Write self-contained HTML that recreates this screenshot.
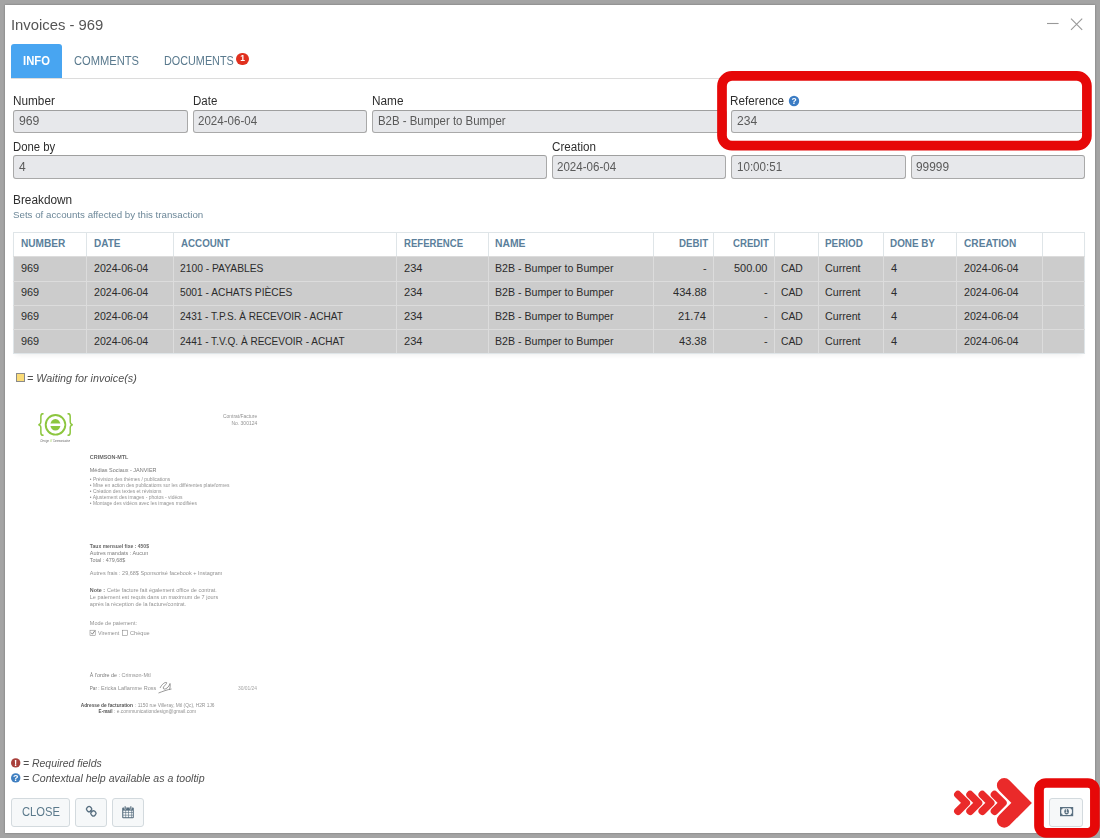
<!DOCTYPE html>
<html lang="en">
<head>
<meta charset="utf-8">
<title>Invoices - 969</title>
<style>
*{box-sizing:border-box;margin:0;padding:0}
html,body{width:1100px;height:838px;overflow:hidden;background:#a4a4a4;font-family:"Liberation Sans",sans-serif}
body{position:relative}
.a{position:absolute}
.t{position:absolute;white-space:nowrap;line-height:16px;height:16px;transform-origin:0 0}
#win{left:5px;top:5px;width:1090px;height:828px;background:#fff;box-shadow:0 0 2px rgba(0,0,0,.3)}
.inp{position:absolute;background:#e7e8eb;border:1px solid #a9a9a9;border-top-color:#9f9f9f;border-radius:3px}
.btn{position:absolute;background:#f6f8f9;border:1px solid #d3dade;border-radius:3px}
.vl{position:absolute;width:1px;background:#dfe5e8;top:232px;height:24px}
.vr{position:absolute;width:1px;background:#dcdcdc;top:256px;height:97px}
.hl{position:absolute;left:13px;width:1072px;height:1px;background:#dcdcdc}
</style>
</head>
<body>
<div class="a" id="win"></div>
<!-- window controls -->
<svg class="a" style="left:1040px;top:12px" width="50" height="24" viewBox="1040 12 50 24">
  <path d="M1047 23.5H1058.6" stroke="#999" stroke-width="1.1" fill="none"/>
  <path d="M1071 18.6L1082.2 29.9M1082.2 18.6L1071 29.9" stroke="#999" stroke-width="1.1" fill="none"/>
</svg>
<!-- tabs -->
<div class="a" style="left:11px;top:44px;width:51px;height:34px;background:#48a5f1;border-radius:3px 3px 0 0"></div>
<div class="a" style="left:11px;top:78px;width:1074px;height:1px;background:#dcdcdc"></div>
<div class="a" style="left:236px;top:52.7px;width:12.8px;height:12.8px;border-radius:50%;background:#e0301e"></div>
<!-- inputs -->
<div class="inp" style="left:13px;top:110px;width:174.5px;height:23px"></div>
<div class="inp" style="left:193px;top:110px;width:173.5px;height:23px"></div>
<div class="inp" style="left:372px;top:110px;width:354.5px;height:23px"></div>
<div class="inp" style="left:731px;top:110px;width:353.5px;height:23px"></div>
<div class="inp" style="left:13px;top:155px;width:534px;height:24px"></div>
<div class="inp" style="left:552px;top:155px;width:173.5px;height:24px"></div>
<div class="inp" style="left:731px;top:155px;width:174.5px;height:24px"></div>
<div class="inp" style="left:911px;top:155px;width:173.5px;height:24px"></div>
<!-- table -->
<div class="a" style="left:13px;top:232px;width:1072px;height:121.5px;background:#fff;border:1px solid #dfe5e8;box-shadow:0 4px 5px -3px rgba(0,0,0,.07)"></div>
<div class="a" style="left:14px;top:256px;width:1070px;height:97px;background:#cccccc"></div>
<div class="hl" style="top:256px"></div><div class="hl" style="top:281px"></div><div class="hl" style="top:305px"></div><div class="hl" style="top:329px"></div>
<div class="vl" style="left:86px"></div><div class="vr" style="left:86px"></div>
<div class="vl" style="left:173px"></div><div class="vr" style="left:173px"></div>
<div class="vl" style="left:396px"></div><div class="vr" style="left:396px"></div>
<div class="vl" style="left:488px"></div><div class="vr" style="left:488px"></div>
<div class="vl" style="left:653px"></div><div class="vr" style="left:653px"></div>
<div class="vl" style="left:713px"></div><div class="vr" style="left:713px"></div>
<div class="vl" style="left:774px"></div><div class="vr" style="left:774px"></div>
<div class="vl" style="left:818px"></div><div class="vr" style="left:818px"></div>
<div class="vl" style="left:883px"></div><div class="vr" style="left:883px"></div>
<div class="vl" style="left:956px"></div><div class="vr" style="left:956px"></div>
<div class="vl" style="left:1042px"></div><div class="vr" style="left:1042px"></div>
<!-- waiting legend box -->
<div class="a" style="left:16px;top:373px;width:9px;height:9px;background:#fbdc78;border:1px solid #8a8a8a"></div>
<!-- buttons -->
<div class="btn" style="left:11px;top:798px;width:59px;height:28.5px"></div>
<div class="btn" style="left:75px;top:798px;width:32px;height:28.5px"></div>
<div class="btn" style="left:112px;top:798px;width:32px;height:28.5px"></div>
<div class="btn" style="left:1049px;top:798px;width:33.5px;height:28.5px"></div>
<!-- link icon -->
<svg class="a" style="left:84px;top:804px" width="15" height="15" viewBox="84 804 15 15" fill="none" stroke="#5a7182" stroke-width="1.35"><rect x="86.7" y="806.7" width="4.8" height="4.8" rx="1.9" transform="rotate(45 89.1 809.1)"/><rect x="91" y="811" width="4.8" height="4.8" rx="1.9" transform="rotate(45 93.4 813.4)"/><path d="M90.2 810.2L92.3 812.3" stroke-width="1.5"/></svg>
<!-- calendar icon -->
<svg class="a" style="left:121px;top:805px" width="14" height="14" viewBox="0 0 14 14"><rect x="1.2" y="2.6" width="11.6" height="10.6" rx="1" fill="#566d7e"/><g fill="#f6f8f9"><rect x="2.3" y="5.6" width="2.2" height="1.8"/><rect x="5.1" y="5.6" width="2.2" height="1.8"/><rect x="7.9" y="5.6" width="2.2" height="1.8"/><rect x="10.6" y="5.6" width="1.2" height="1.8"/><rect x="2.3" y="8" width="2.2" height="1.8"/><rect x="5.1" y="8" width="2.2" height="1.8"/><rect x="7.9" y="8" width="2.2" height="1.8"/><rect x="10.6" y="8" width="1.2" height="1.8"/><rect x="2.3" y="10.4" width="2.2" height="1.8"/><rect x="5.1" y="10.4" width="2.2" height="1.8"/><rect x="7.9" y="10.4" width="2.2" height="1.8"/><rect x="10.6" y="10.4" width="1.2" height="1.8"/></g><rect x="3.4" y="1" width="1.6" height="3.4" rx=".6" fill="#566d7e" stroke="#f6f8f9" stroke-width=".5"/><rect x="9" y="1" width="1.6" height="3.4" rx=".6" fill="#566d7e" stroke="#f6f8f9" stroke-width=".5"/></svg>
<!-- red annotations -->
<svg class="a" style="left:0;top:0;pointer-events:none" width="1100" height="838" viewBox="0 0 1100 838">
  <rect x="722" y="75.9" width="364.9" height="69.8" rx="10" ry="10" fill="none" stroke="#e60808" stroke-width="9.7"/>
  <rect x="1039" y="783" width="55.9" height="49.8" rx="7" ry="7" fill="none" stroke="#e60808" stroke-width="9.7"/>
  <g fill="none" stroke="#ea2a2a" stroke-linecap="round" stroke-linejoin="round">
    <path d="M1004.2 785.4L1021.6 802.9L1004.2 820.4" stroke-width="14.6" stroke-linejoin="miter"/>
    <path d="M957.9 794.6L966.3 802.9L957.9 811.2" stroke-width="7.6"/>
    <path d="M970.1 794.6L978.5 802.9L970.1 811.2" stroke-width="7.6"/>
    <path d="M982.3 794.6L990.7 802.9L982.3 811.2" stroke-width="7.6"/>
    <path d="M994.5 794.6L1002.9 802.9L994.5 811.2" stroke-width="7.6"/>
  </g>
</svg>

<span class="t" id="t20" style="left:21.00px;top:235.00px;font-size:11px;color:#5b7f9b;transform:scaleX(0.9189);font-weight:bold">NUMBER</span>
<span class="t" id="t21" style="left:94.00px;top:235.00px;font-size:11px;color:#5b7f9b;transform:scaleX(0.9101);font-weight:bold">DATE</span>
<span class="t" id="t22" style="left:181.00px;top:235.00px;font-size:11px;color:#5b7f9b;transform:scaleX(0.8876);font-weight:bold">ACCOUNT</span>
<span class="t" id="t23" style="left:404.00px;top:235.00px;font-size:11px;color:#5b7f9b;transform:scaleX(0.8701);font-weight:bold">REFERENCE</span>
<span class="t" id="t24" style="left:495.00px;top:235.00px;font-size:11px;color:#5b7f9b;transform:scaleX(0.9426);font-weight:bold">NAME</span>
<span class="t" id="t25" style="left:679.00px;top:235.00px;font-size:11px;color:#5b7f9b;transform:scaleX(0.8805);font-weight:bold">DEBIT</span>
<span class="t" id="t26" style="left:733.00px;top:235.00px;font-size:11px;color:#5b7f9b;transform:scaleX(0.8746);font-weight:bold">CREDIT</span>
<span class="t" id="t27" style="left:825.00px;top:235.00px;font-size:11px;color:#5b7f9b;transform:scaleX(0.8987);font-weight:bold">PERIOD</span>
<span class="t" id="t28" style="left:890.00px;top:235.00px;font-size:11px;color:#5b7f9b;transform:scaleX(0.8970);font-weight:bold">DONE BY</span>
<span class="t" id="t29" style="left:964.00px;top:235.00px;font-size:11px;color:#5b7f9b;transform:scaleX(0.9222);font-weight:bold">CREATION</span>
<span class="t" id="t30" style="left:21.00px;top:260.00px;font-size:11px;color:#2b2b2b;transform:scaleX(0.9888)">969</span>
<span class="t" id="t31" style="left:94.00px;top:260.00px;font-size:11px;color:#2b2b2b;transform:scaleX(0.9643)">2024-06-04</span>
<span class="t" id="t32" style="left:180.00px;top:260.00px;font-size:11px;color:#2b2b2b;transform:scaleX(0.9350)">2100 - PAYABLES</span>
<span class="t" id="t33" style="left:404.00px;top:260.00px;font-size:11px;color:#2b2b2b;transform:scaleX(1.0085)">234</span>
<span class="t" id="t34" style="left:495.00px;top:260.00px;font-size:11px;color:#2b2b2b;transform:scaleX(0.9640)">B2B - Bumper to Bumper</span>
<span class="t" id="t35" style="left:703.00px;top:260.00px;font-size:11px;color:#2b2b2b">-</span>
<span class="t" id="t36" style="left:734.00px;top:260.00px;font-size:11px;color:#2b2b2b;transform:scaleX(0.9943)">500.00</span>
<span class="t" id="t37" style="left:781.00px;top:260.00px;font-size:11px;color:#2b2b2b;transform:scaleX(0.9390)">CAD</span>
<span class="t" id="t38" style="left:825.00px;top:260.00px;font-size:11px;color:#2b2b2b;transform:scaleX(0.9694)">Current</span>
<span class="t" id="t39" style="left:891.00px;top:260.00px;font-size:11px;color:#2b2b2b">4</span>
<span class="t" id="t40" style="left:964.00px;top:260.00px;font-size:11px;color:#2b2b2b;transform:scaleX(0.9687)">2024-06-04</span>
<span class="t" id="t41" style="left:21.00px;top:284.00px;font-size:11px;color:#2b2b2b;transform:scaleX(0.9888)">969</span>
<span class="t" id="t42" style="left:94.00px;top:284.00px;font-size:11px;color:#2b2b2b;transform:scaleX(0.9643)">2024-06-04</span>
<span class="t" id="t43" style="left:180.00px;top:284.00px;font-size:11px;color:#2b2b2b;transform:scaleX(0.9296)">5001 - ACHATS PIÈCES</span>
<span class="t" id="t44" style="left:404.00px;top:284.00px;font-size:11px;color:#2b2b2b;transform:scaleX(1.0085)">234</span>
<span class="t" id="t45" style="left:495.00px;top:284.00px;font-size:11px;color:#2b2b2b;transform:scaleX(0.9640)">B2B - Bumper to Bumper</span>
<span class="t" id="t46" style="left:673.00px;top:284.00px;font-size:11px;color:#2b2b2b;transform:scaleX(1.0025)">434.88</span>
<span class="t" id="t47" style="left:764.00px;top:284.00px;font-size:11px;color:#2b2b2b">-</span>
<span class="t" id="t48" style="left:781.00px;top:284.00px;font-size:11px;color:#2b2b2b;transform:scaleX(0.9390)">CAD</span>
<span class="t" id="t49" style="left:825.00px;top:284.00px;font-size:11px;color:#2b2b2b;transform:scaleX(0.9694)">Current</span>
<span class="t" id="t50" style="left:891.00px;top:284.00px;font-size:11px;color:#2b2b2b">4</span>
<span class="t" id="t51" style="left:964.00px;top:284.00px;font-size:11px;color:#2b2b2b;transform:scaleX(0.9687)">2024-06-04</span>
<span class="t" id="t52" style="left:21.00px;top:308.00px;font-size:11px;color:#2b2b2b;transform:scaleX(0.9888)">969</span>
<span class="t" id="t53" style="left:94.00px;top:308.00px;font-size:11px;color:#2b2b2b;transform:scaleX(0.9643)">2024-06-04</span>
<span class="t" id="t54" style="left:180.00px;top:308.00px;font-size:11px;color:#2b2b2b;transform:scaleX(0.9125)">2431 - T.P.S. À RECEVOIR - ACHAT</span>
<span class="t" id="t55" style="left:404.00px;top:308.00px;font-size:11px;color:#2b2b2b;transform:scaleX(1.0085)">234</span>
<span class="t" id="t56" style="left:495.00px;top:308.00px;font-size:11px;color:#2b2b2b;transform:scaleX(0.9640)">B2B - Bumper to Bumper</span>
<span class="t" id="t57" style="left:678.00px;top:308.00px;font-size:11px;color:#2b2b2b;transform:scaleX(1.0109)">21.74</span>
<span class="t" id="t58" style="left:764.00px;top:308.00px;font-size:11px;color:#2b2b2b">-</span>
<span class="t" id="t59" style="left:781.00px;top:308.00px;font-size:11px;color:#2b2b2b;transform:scaleX(0.9390)">CAD</span>
<span class="t" id="t60" style="left:825.00px;top:308.00px;font-size:11px;color:#2b2b2b;transform:scaleX(0.9694)">Current</span>
<span class="t" id="t61" style="left:891.00px;top:308.00px;font-size:11px;color:#2b2b2b">4</span>
<span class="t" id="t62" style="left:964.00px;top:308.00px;font-size:11px;color:#2b2b2b;transform:scaleX(0.9687)">2024-06-04</span>
<span class="t" id="t63" style="left:21.00px;top:333.00px;font-size:11px;color:#2b2b2b;transform:scaleX(0.9888)">969</span>
<span class="t" id="t64" style="left:94.00px;top:333.00px;font-size:11px;color:#2b2b2b;transform:scaleX(0.9643)">2024-06-04</span>
<span class="t" id="t65" style="left:180.00px;top:333.00px;font-size:11px;color:#2b2b2b;transform:scaleX(0.9136)">2441 - T.V.Q. À RECEVOIR - ACHAT</span>
<span class="t" id="t66" style="left:404.00px;top:333.00px;font-size:11px;color:#2b2b2b;transform:scaleX(1.0085)">234</span>
<span class="t" id="t67" style="left:495.00px;top:333.00px;font-size:11px;color:#2b2b2b;transform:scaleX(0.9640)">B2B - Bumper to Bumper</span>
<span class="t" id="t68" style="left:679.00px;top:333.00px;font-size:11px;color:#2b2b2b;transform:scaleX(1.0049)">43.38</span>
<span class="t" id="t69" style="left:764.00px;top:333.00px;font-size:11px;color:#2b2b2b">-</span>
<span class="t" id="t70" style="left:781.00px;top:333.00px;font-size:11px;color:#2b2b2b;transform:scaleX(0.9390)">CAD</span>
<span class="t" id="t71" style="left:825.00px;top:333.00px;font-size:11px;color:#2b2b2b;transform:scaleX(0.9694)">Current</span>
<span class="t" id="t72" style="left:891.00px;top:333.00px;font-size:11px;color:#2b2b2b">4</span>
<span class="t" id="t73" style="left:964.00px;top:333.00px;font-size:11px;color:#2b2b2b;transform:scaleX(0.9687)">2024-06-04</span>
<div class="a" style="left:0;top:0;width:1100px;height:838px;will-change:transform">
<span class="t" id="t0" style="left:11.00px;top:17.00px;font-size:15.5px;color:#555555;transform:scaleX(0.9570)">Invoices - 969</span>
<span class="t" id="t1" style="left:23.00px;top:53.00px;font-size:13px;color:#ffffff;transform:scaleX(0.8656);font-weight:bold">INFO</span>
<span class="t" id="t2" style="left:74.00px;top:53.00px;font-size:13px;color:#5a7a8e;transform:scaleX(0.8572)">COMMENTS</span>
<span class="t" id="t3" style="left:164.00px;top:53.00px;font-size:13px;color:#5a7a8e;transform:scaleX(0.8326)">DOCUMENTS</span>
<span class="t" id="t4" style="left:13.00px;top:93.00px;font-size:12px;color:#2e2e2e;transform:scaleX(0.9810)">Number</span>
<span class="t" id="t5" style="left:193.00px;top:93.00px;font-size:12px;color:#2e2e2e;transform:scaleX(0.9579)">Date</span>
<span class="t" id="t6" style="left:372.00px;top:93.00px;font-size:12px;color:#2e2e2e;transform:scaleX(0.9828)">Name</span>
<span class="t" id="t7" style="left:730.00px;top:93.00px;font-size:12px;color:#2e2e2e;transform:scaleX(0.9758)">Reference</span>
<span class="t" id="t8" style="left:13.00px;top:139.00px;font-size:12px;color:#2e2e2e;transform:scaleX(0.9432)">Done by</span>
<span class="t" id="t9" style="left:552.00px;top:139.00px;font-size:12px;color:#2e2e2e;transform:scaleX(0.9700)">Creation</span>
<span class="t" id="t10" style="left:19.00px;top:113.00px;font-size:12px;color:#5a5a5a;transform:scaleX(1.0200)">969</span>
<span class="t" id="t11" style="left:198.00px;top:113.00px;font-size:12px;color:#5a5a5a;transform:scaleX(0.9636)">2024-06-04</span>
<span class="t" id="t12" style="left:378.00px;top:113.00px;font-size:12px;color:#5a5a5a;transform:scaleX(0.9518)">B2B - Bumper to Bumper</span>
<span class="t" id="t13" style="left:737.00px;top:113.00px;font-size:12px;color:#5a5a5a;transform:scaleX(1.0062)">234</span>
<span class="t" id="t14" style="left:19.00px;top:159.00px;font-size:12px;color:#5a5a5a">4</span>
<span class="t" id="t15" style="left:557.00px;top:159.00px;font-size:12px;color:#5a5a5a;transform:scaleX(0.9636)">2024-06-04</span>
<span class="t" id="t16" style="left:737.00px;top:159.00px;font-size:12px;color:#5a5a5a;transform:scaleX(0.9664)">10:00:51</span>
<span class="t" id="t17" style="left:916.00px;top:159.00px;font-size:12px;color:#5a5a5a;transform:scaleX(0.9892)">99999</span>
<span class="t" id="t18" style="left:13.00px;top:192.00px;font-size:12px;color:#2e2e2e;transform:scaleX(0.9856)">Breakdown</span>
<span class="t" id="t19" style="left:13.00px;top:207.00px;font-size:9.5px;color:#6c8798;transform:scaleX(1.0242)">Sets of accounts affected by this transaction</span>
<span class="t" id="t74" style="left:27.00px;top:370.00px;font-size:11px;color:#505050;transform:scaleX(0.9798);font-style:italic">= Waiting for invoice(s)</span>
<span class="t" id="t75" style="left:23.00px;top:755.00px;font-size:11px;color:#505050;transform:scaleX(0.9503);font-style:italic">= Required fields</span>
<span class="t" id="t76" style="left:23.00px;top:770.00px;font-size:11px;color:#505050;transform:scaleX(0.9625);font-style:italic">= Contextual help available as a tooltip</span>
<span class="t" id="t77" style="left:22.00px;top:804.00px;font-size:13px;color:#5b7a8c;transform:scaleX(0.8624)">CLOSE</span>
<span class="t" style="left:240.2px;top:50.4px;font-size:8.5px;font-weight:bold;color:#fff">1</span>
<!-- help icon next to Reference -->
<svg class="a" style="left:788px;top:95px" width="12" height="12" viewBox="0 0 12 12"><circle cx="6" cy="6" r="5.2" fill="#3b7cc4"/><text x="6" y="9.2" font-family="Liberation Sans, sans-serif" font-weight="bold" font-size="8.5" fill="#fff" text-anchor="middle">?</text></svg>
<!-- footer legend icons -->
<svg class="a" style="left:10px;top:757px" width="12" height="12" viewBox="0 0 12 12"><circle cx="5.7" cy="5.9" r="4.7" fill="#a9403c"/><text x="5.7" y="9.1" font-family="Liberation Sans, sans-serif" font-weight="bold" font-size="9.5" fill="#fff" text-anchor="middle">!</text></svg>
<svg class="a" style="left:10px;top:772px" width="12" height="12" viewBox="0 0 12 12"><circle cx="5.7" cy="5.9" r="4.7" fill="#3f7fc1"/><text x="5.7" y="9" font-family="Liberation Sans, sans-serif" font-weight="bold" font-size="9" fill="#fff" text-anchor="middle">?</text></svg>
<!-- money icon -->
<svg class="a" style="left:1060px;top:807px" width="14" height="10" viewBox="0 0 14 10"><rect x="0" y="0" width="13.2" height="9.2" fill="#5b7182"/><path d="M2.6 1.3h8a1.4 1.4 0 0 0 1.3 1.3v4a1.4 1.4 0 0 0 -1.3 1.3h-8a1.4 1.4 0 0 0 -1.3 -1.3v-4a1.4 1.4 0 0 0 1.3 -1.3z" fill="#f6f8f9"/><ellipse cx="6.6" cy="4.6" rx="2.3" ry="2.9" fill="#5b7182"/><text x="6.6" y="6.3" font-family="Liberation Sans, sans-serif" font-weight="bold" font-size="4.6" fill="#f6f8f9" text-anchor="middle">1</text></svg>
</div>
<svg class="a" style="left:0;top:400px;will-change:transform" width="300" height="330" viewBox="0 400 300 330" font-family="Liberation Sans, sans-serif">
<g fill="none" stroke="#8cc63e"><circle cx="55.5" cy="424.8" r="9.8" stroke-width="1.9"/></g>
<ellipse cx="55.4" cy="424.8" rx="5.1" ry="5.8" fill="#8cc63e"/><rect x="50" y="423.5" width="14.2" height="2.5" fill="#fff"/>
<text transform="translate(37.9 431.1) scale(1.35 1.83)" font-size="13" fill="#8cc63e">{</text>
<text transform="translate(67.3 431.1) scale(1.35 1.83)" font-size="13" fill="#8cc63e">}</text>
<text x="223.0" y="418.0" font-size="4.6" fill="#929292" textLength="34.2" lengthAdjust="spacingAndGlyphs">Contrat/Facture</text>
<text x="231.5" y="424.6" font-size="4.6" fill="#929292" textLength="25.7" lengthAdjust="spacingAndGlyphs">No. 300124</text>
<text x="89.8" y="458.6" font-size="5.4" fill="#686868" font-weight="bold" textLength="38.6" lengthAdjust="spacingAndGlyphs">CRIMSON-MTL</text>
<text x="89.8" y="471.8" font-size="5.4" fill="#777" textLength="66.7" lengthAdjust="spacingAndGlyphs">Médias Sociaux - JANVIER</text>
<text x="89.8" y="480.9" font-size="5.0" fill="#929292" textLength="80.4" lengthAdjust="spacingAndGlyphs">• Prévision des thèmes / publications</text>
<text x="89.8" y="487.0" font-size="5.0" fill="#929292" textLength="139.7" lengthAdjust="spacingAndGlyphs">• Mise en action des publications sur les différentes plateformes</text>
<text x="89.8" y="492.7" font-size="5.0" fill="#929292" textLength="71.6" lengthAdjust="spacingAndGlyphs">• Création des textes et révisions</text>
<text x="89.8" y="498.6" font-size="5.0" fill="#929292" textLength="92.7" lengthAdjust="spacingAndGlyphs">• Ajustement des images - photos - vidéos</text>
<text x="89.8" y="504.5" font-size="5.0" fill="#929292" textLength="107.2" lengthAdjust="spacingAndGlyphs">• Montage des vidéos avec les images modifiées</text>
<text x="89.8" y="548.4" font-size="4.8" fill="#686868" font-weight="bold" textLength="59.2" lengthAdjust="spacingAndGlyphs">Taux mensuel fixe : 450$</text>
<text x="89.8" y="555.0" font-size="4.8" fill="#7c7c7c" textLength="58.4" lengthAdjust="spacingAndGlyphs">Autres mandats : Aucun</text>
<text x="89.8" y="561.6" font-size="4.8" fill="#7c7c7c" textLength="35.6" lengthAdjust="spacingAndGlyphs">Total : 479,68$</text>
<text x="89.8" y="574.7" font-size="4.8" fill="#929292" textLength="132.5" lengthAdjust="spacingAndGlyphs">Autres frais : 29,68$ Sponsorisé facebook + Instagram</text>
<text x="89.8" y="592.3" font-size="4.8" fill="#686868" font-weight="bold" textLength="15.2" lengthAdjust="spacingAndGlyphs">Note :</text>
<text x="107.0" y="592.3" font-size="4.8" fill="#929292" textLength="109.8" lengthAdjust="spacingAndGlyphs">Cette facture fait également office de contrat.</text>
<text x="89.8" y="598.9" font-size="4.8" fill="#929292" textLength="128.4" lengthAdjust="spacingAndGlyphs">Le paiement est requis dans un maximum de 7 jours</text>
<text x="89.8" y="605.6" font-size="4.8" fill="#929292" textLength="96.3" lengthAdjust="spacingAndGlyphs">après la réception de la facture/contrat.</text>
<text x="89.8" y="625.0" font-size="4.8" fill="#929292" textLength="47.2" lengthAdjust="spacingAndGlyphs">Mode de paiement:</text>
<text x="98.0" y="634.7" font-size="4.6" fill="#929292" textLength="21.3" lengthAdjust="spacingAndGlyphs">Virement</text>
<text x="130.0" y="634.7" font-size="4.6" fill="#929292" textLength="19.7" lengthAdjust="spacingAndGlyphs">Chèque</text>
<text x="89.8" y="677.0" font-size="4.8" fill="#777" textLength="30.2" lengthAdjust="spacingAndGlyphs">À l'ordre de :</text>
<text x="121.5" y="677.0" font-size="4.8" fill="#929292" textLength="29.1" lengthAdjust="spacingAndGlyphs">Crimson-Mtl</text>
<text x="89.8" y="690.0" font-size="4.8" fill="#777" textLength="9.7" lengthAdjust="spacingAndGlyphs">Par :</text>
<text x="101.0" y="690.0" font-size="4.8" fill="#929292" textLength="55.3" lengthAdjust="spacingAndGlyphs">Ericka Laflamme Ross</text>
<text x="238.0" y="690.0" font-size="4.6" fill="#a6a6a6" textLength="19.0" lengthAdjust="spacingAndGlyphs">30/01/24</text>
<text x="80.7" y="706.8" font-size="4.9" fill="#555" font-weight="bold" textLength="52.3" lengthAdjust="spacingAndGlyphs">Adresse de facturation</text>
<text x="135.0" y="706.8" font-size="4.9" fill="#929292" textLength="79.5" lengthAdjust="spacingAndGlyphs">: 1150 rue Villeray, Mtl (Qc), H2R 1J6</text>
<text x="98.6" y="712.8" font-size="4.9" fill="#555" font-weight="bold" textLength="13.9" lengthAdjust="spacingAndGlyphs">E-mail</text>
<text x="114.0" y="712.8" font-size="4.9" fill="#929292" textLength="82.0" lengthAdjust="spacingAndGlyphs">: e.communicationdesign@gmail.com</text>
<text x="40.6" y="442.0" font-size="3.2" fill="#666" font-style="italic" textLength="8.4" lengthAdjust="spacingAndGlyphs">Design</text>
<text x="50.0" y="442.0" font-size="3.2" fill="#8dc63f" font-style="italic" textLength="2.0" lengthAdjust="spacingAndGlyphs">//</text>
<text x="53.0" y="442.0" font-size="3.2" fill="#666" font-style="italic" textLength="17.1" lengthAdjust="spacingAndGlyphs">Communication</text>
<g fill="none" stroke="#777" stroke-width=".5"><rect x="90" y="630.2" width="5.2" height="5.2"/><rect x="122.4" y="630.2" width="5.2" height="5.2"/><path d="M91 632.6l1.4 1.6l2.4-3.4" stroke="#555" stroke-width=".7"/></g>
<path d="M160 688c2-4 5-6 6.500-5.500c1 .6-2 3-3 4.500c-1 2 1 3 3.500 1c1.500-1 2.500-3 3-4.500c.3 2 .2 4-.5 6M158.500 693c4-1.500 9-3.500 13-4" fill="none" stroke="#555" stroke-width=".6"/>
</svg>
</body>
</html>
